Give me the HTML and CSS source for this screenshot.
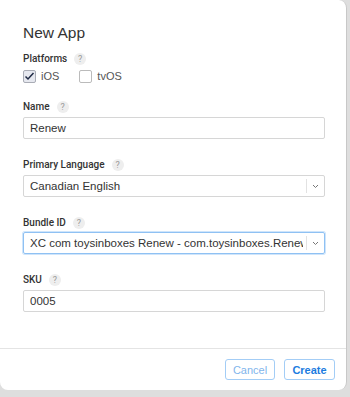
FILE: index.html
```html
<!DOCTYPE html>
<html lang="en">
<head>
    <meta charset="UTF-8">
    <title>New App</title>
    <link rel="stylesheet" href="styles.css">
</head>
<body>
    <div class="dialog">
        <div class="dialog-body">
            <h1 class="title">New App</h1>

            <div class="field platforms">
                <div class="label">Platforms <span class="help">?</span></div>
                <div class="checks">
                    <label class="check">
                        <span class="box checked">
                            <svg width="11" height="9" viewBox="0 0 11 9"><path d="M1.5 4.5 L4 7 L9.5 1" fill="none" stroke="#1f2a44" stroke-width="1.5"/></svg>
                        </span>
                        iOS
                    </label>
                    <label class="check">
                        <span class="box"></span>
                        tvOS
                    </label>
                </div>
            </div>

            <div class="field">
                <div class="label">Name <span class="help">?</span></div>
                <div class="input">Renew</div>
            </div>

            <div class="field">
                <div class="label">Primary Language <span class="help">?</span></div>
                <div class="input select">
                    <span class="value">Canadian English</span>
                    <span class="arrow"><svg width="7" height="5" viewBox="0 0 7 5"><path d="M1 1 L3.5 3.5 L6 1" fill="none" stroke="#777" stroke-width="1"/></svg></span>
                </div>
            </div>

            <div class="field">
                <div class="label">Bundle ID <span class="help">?</span></div>
                <div class="input select focused">
                    <span class="value">XC com toysinboxes Renew - com.toysinboxes.Renew</span>
                    <span class="arrow"><svg width="7" height="5" viewBox="0 0 7 5"><path d="M1 1 L3.5 3.5 L6 1" fill="none" stroke="#777" stroke-width="1"/></svg></span>
                </div>
            </div>

            <div class="field">
                <div class="label">SKU <span class="help">?</span></div>
                <div class="input">0005</div>
            </div>
        </div>

        <div class="dialog-footer">
            <button class="btn">Cancel</button>
            <button class="btn primary">Create</button>
        </div>
    </div>
</body>
</html>
```

FILE: styles.css
```css
body {
    margin: 0;
    background-color: #dedede;
    font-family: "Liberation Sans", Arial, sans-serif;
    color: #333;
}

.dialog {
    width: 346px;
    height: 390px;
    background-color: #fff;
    border-right: 1px solid #c8c8c8;
    border-radius: 0 8px 8px 8px;
    display: flex;
    flex-direction: column;
}

.dialog-body {
    padding: 24px 21px 0 23px;
    flex: 1;
}

.title {
    font-size: 15.5px;
    line-height: 18px;
    font-weight: normal;
    margin: 0 0 10px 0;
    color: #333;
}

.field {
    margin-bottom: 19px;
}

.label {
    font-family: Roboto, "Liberation Sans", sans-serif;
    font-size: 10px;
    font-weight: 500;
    color: #333;
    height: 14px;
    line-height: 14px;
    margin-bottom: 3px;
    display: flex;
    align-items: center;
}

.help {
    display: inline-block;
    width: 12px;
    height: 12px;
    line-height: 12px;
    border-radius: 50%;
    background-color: #eeeeee;
    color: #9a9a9a;
    font-size: 9px;
    font-weight: normal;
    text-align: center;
    margin-left: 7px;
}

.platforms {
    margin-bottom: 16px;
}

.platforms .label {
    margin-bottom: 2px;
}

.checks {
    display: flex;
    gap: 20px;
    height: 16px;
    align-items: center;
}

.check {
    display: flex;
    align-items: center;
    gap: 5px;
    font-size: 11px;
    color: #555;
}

.box {
    width: 11px;
    height: 11px;
    border: 1px solid #bbb;
    border-radius: 2px;
    background-color: #fff;
    position: relative;
}

.box.checked {
    background-color: #e6e8ef;
    border-color: #a9acb5;
}

.box svg {
    position: absolute;
    left: 0;
    top: 1px;
}

.input {
    box-sizing: border-box;
    height: 22px;
    border: 1px solid #d6d6d6;
    border-radius: 2px;
    padding: 0 6px;
    font-size: 11.5px;
    line-height: 20px;
    color: #333;
}

.select {
    display: flex;
    align-items: center;
    padding-right: 0;
}

.select .value {
    flex: 1;
    white-space: nowrap;
    overflow: hidden;
    margin-right: 3px;
}

.select .arrow {
    width: 17px;
    height: 14px;
    border-left: 1px solid #e2e2e2;
    display: flex;
    align-items: center;
    justify-content: center;
}

.focused {
    margin-top: -1px;
    border-color: #8fc1f3;
    box-shadow: 0 0 0 1px #cfe5fb;
}

.dialog-footer {
    border-top: 1px solid #e4e4e4;
    height: 41px;
    display: flex;
    justify-content: flex-end;
    align-items: center;
    gap: 9px;
    padding-right: 11px;
}

.btn {
    font-family: "Liberation Sans", Arial, sans-serif;
    font-size: 11px;
    height: 21px;
    width: 50px;
    padding: 0;
    background-color: #fff;
    border: 1px solid #a3cdf6;
    border-radius: 3px;
    color: #7fb5ec;
}

.btn.primary {
    color: #1c7ce0;
    font-weight: bold;
    width: 51px;
}
```
